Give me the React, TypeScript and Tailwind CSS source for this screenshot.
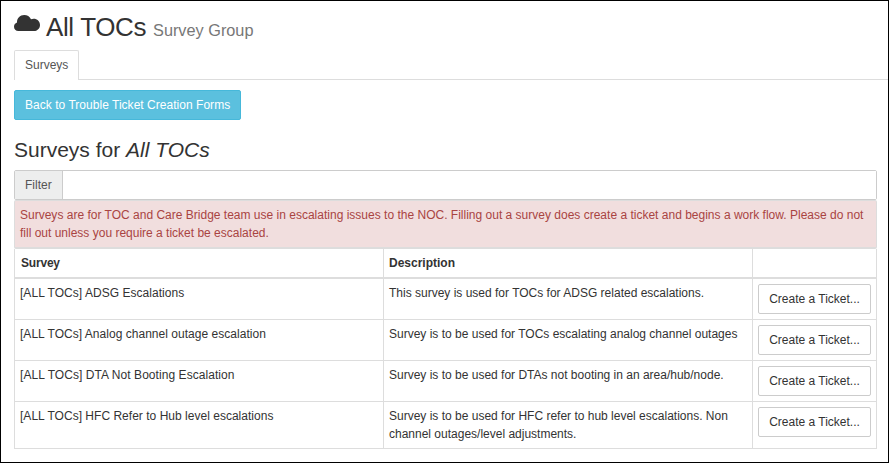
const rows = [
  { name: "[ALL TOCs] ADSG Escalations", desc: ["This survey is used for TOCs for ADSG related escalations."], h: "h-[41px]", track: "tracking-[0.04px]" },
  { name: "[ALL TOCs] Analog channel outage escalation", desc: ["Survey is to be used for TOCs escalating analog channel outages"], h: "h-[41px]", track: "tracking-[0.03px]" },
  { name: "[ALL TOCs] DTA Not Booting Escalation", desc: ["Survey is to be used for DTAs not booting in an area/hub/node."], h: "h-[41px]", track: "tracking-[0.06px]" },
  {
    name: "[ALL TOCs] HFC Refer to Hub level escalations",
    desc: ["Survey is to be used for HFC refer to hub level escalations. Non", "channel outages/level adjustments."],
    h: "h-[47px]",
    track: "tracking-[0.02px]",
  },
];

const cols = "grid grid-cols-[370px_369px_124px]";
const cell = "border-r border-[#ddd] whitespace-nowrap";

export default function App() {
  return (
    <div className="h-[463px] w-[889px] overflow-hidden border border-black bg-white pl-[13px] font-['Liberation_Sans',Arial,sans-serif] text-[12px] leading-[18px] text-[#333]">
      <header className="flex h-[49px] items-start pt-[12px]">
        <svg className="mt-px h-[17px] w-[26px] shrink-0" viewBox="0 0 26 17" fill="#333">
          <path d="M4.4 17C1.8 17 0 15.2 0 12.7C0 10.7 1.2 9.1 3 8.5C2.8 4.2 6 1 10.2 1C13.2 1 15.8 2.6 17 5.2C17.7 4.9 18.7 4.7 19.6 4.7C23.2 4.7 26 7.4 26 10.9C26 14.3 23.3 17 19.8 17Z" />
        </svg>
        <h1 className="ml-[6px] flex items-baseline whitespace-nowrap text-[26px] leading-[28px] tracking-[-0.38px]">
          All TOCs
          <small className="ml-[7px] text-[16.3px] leading-none tracking-normal text-[#777]">Survey Group</small>
        </h1>
      </header>

      <nav className="flex h-[30px] items-stretch">
        <div className="w-[65px] rounded-t-[2px] border border-b-0 border-[#ddd] pl-[10px] pt-[5px] text-[#555]">Surveys</div>
        <div className="flex-1 border-b border-[#ddd]" />
      </nav>

      <main className="w-[863px]">
        <button className="mt-[10px] block h-[30px] w-[227px] whitespace-nowrap rounded-[2px] border border-[#46b8da] bg-[#5bc0de] pl-[10px] text-left tracking-[0.03px] text-white">
          Back to Trouble Ticket Creation Forms
        </button>
        <h2 className="mt-[18px] h-[32px] whitespace-nowrap text-[21px] leading-[24px]">
          Surveys for <em>All TOCs</em>
        </h2>

        <div className="flex h-[30px] rounded-[2px] border border-[#ccc]">
          <label htmlFor="filter" className="w-[48px] rounded-l-[1px] border-r border-[#ccc] bg-[#edeeee] pl-[10px] pt-[5px] text-[#555]">
            Filter
          </label>
          <input id="filter" className="min-w-0 flex-1 bg-white px-2 outline-none" />
        </div>

        <div className="h-[49px] whitespace-nowrap rounded-[2px] border border-b-2 border-[#ddd] bg-[#f1dede] pl-[5px] pt-[5px] text-[#a94442]">
          <p className="tracking-[0.005px]">Surveys are for TOC and Care Bridge team use in escalating issues to the NOC. Filling out a survey does create a ticket and begins a work flow. Please do not</p>
          <p>fill out unless you require a ticket be escalated.</p>
        </div>

        <div>
          <div className={`${cols} h-[30px] border-b-2 border-[#ddd] font-bold`}>
            <div className={`${cell} border-l pl-[6px] pt-[5px] tracking-[-0.2px]`}>Survey</div>
            <div className={`${cell} pl-[5px] pt-[5px]`}>Description</div>
            <div className={cell} />
          </div>
          {rows.map((r) => (
            <div key={r.name} className={`${cols} ${r.h} border-b border-[#ddd]`}>
              <div className={`${cell} ${r.track} border-l pl-[5px] pt-[5px]`}>{r.name}</div>
              <div className={`${cell} pl-[5px] pt-[5px]`}>
                {r.desc.map((d) => (
                  <p key={d}>{d}</p>
                ))}
              </div>
              <div className={`${cell} pl-[5px] pt-[5px]`}>
                <button className="block h-[30px] w-[113px] rounded-[2px] border border-[#ccc] bg-white">Create a Ticket...</button>
              </div>
            </div>
          ))}
        </div>
      </main>
    </div>
  );
}
